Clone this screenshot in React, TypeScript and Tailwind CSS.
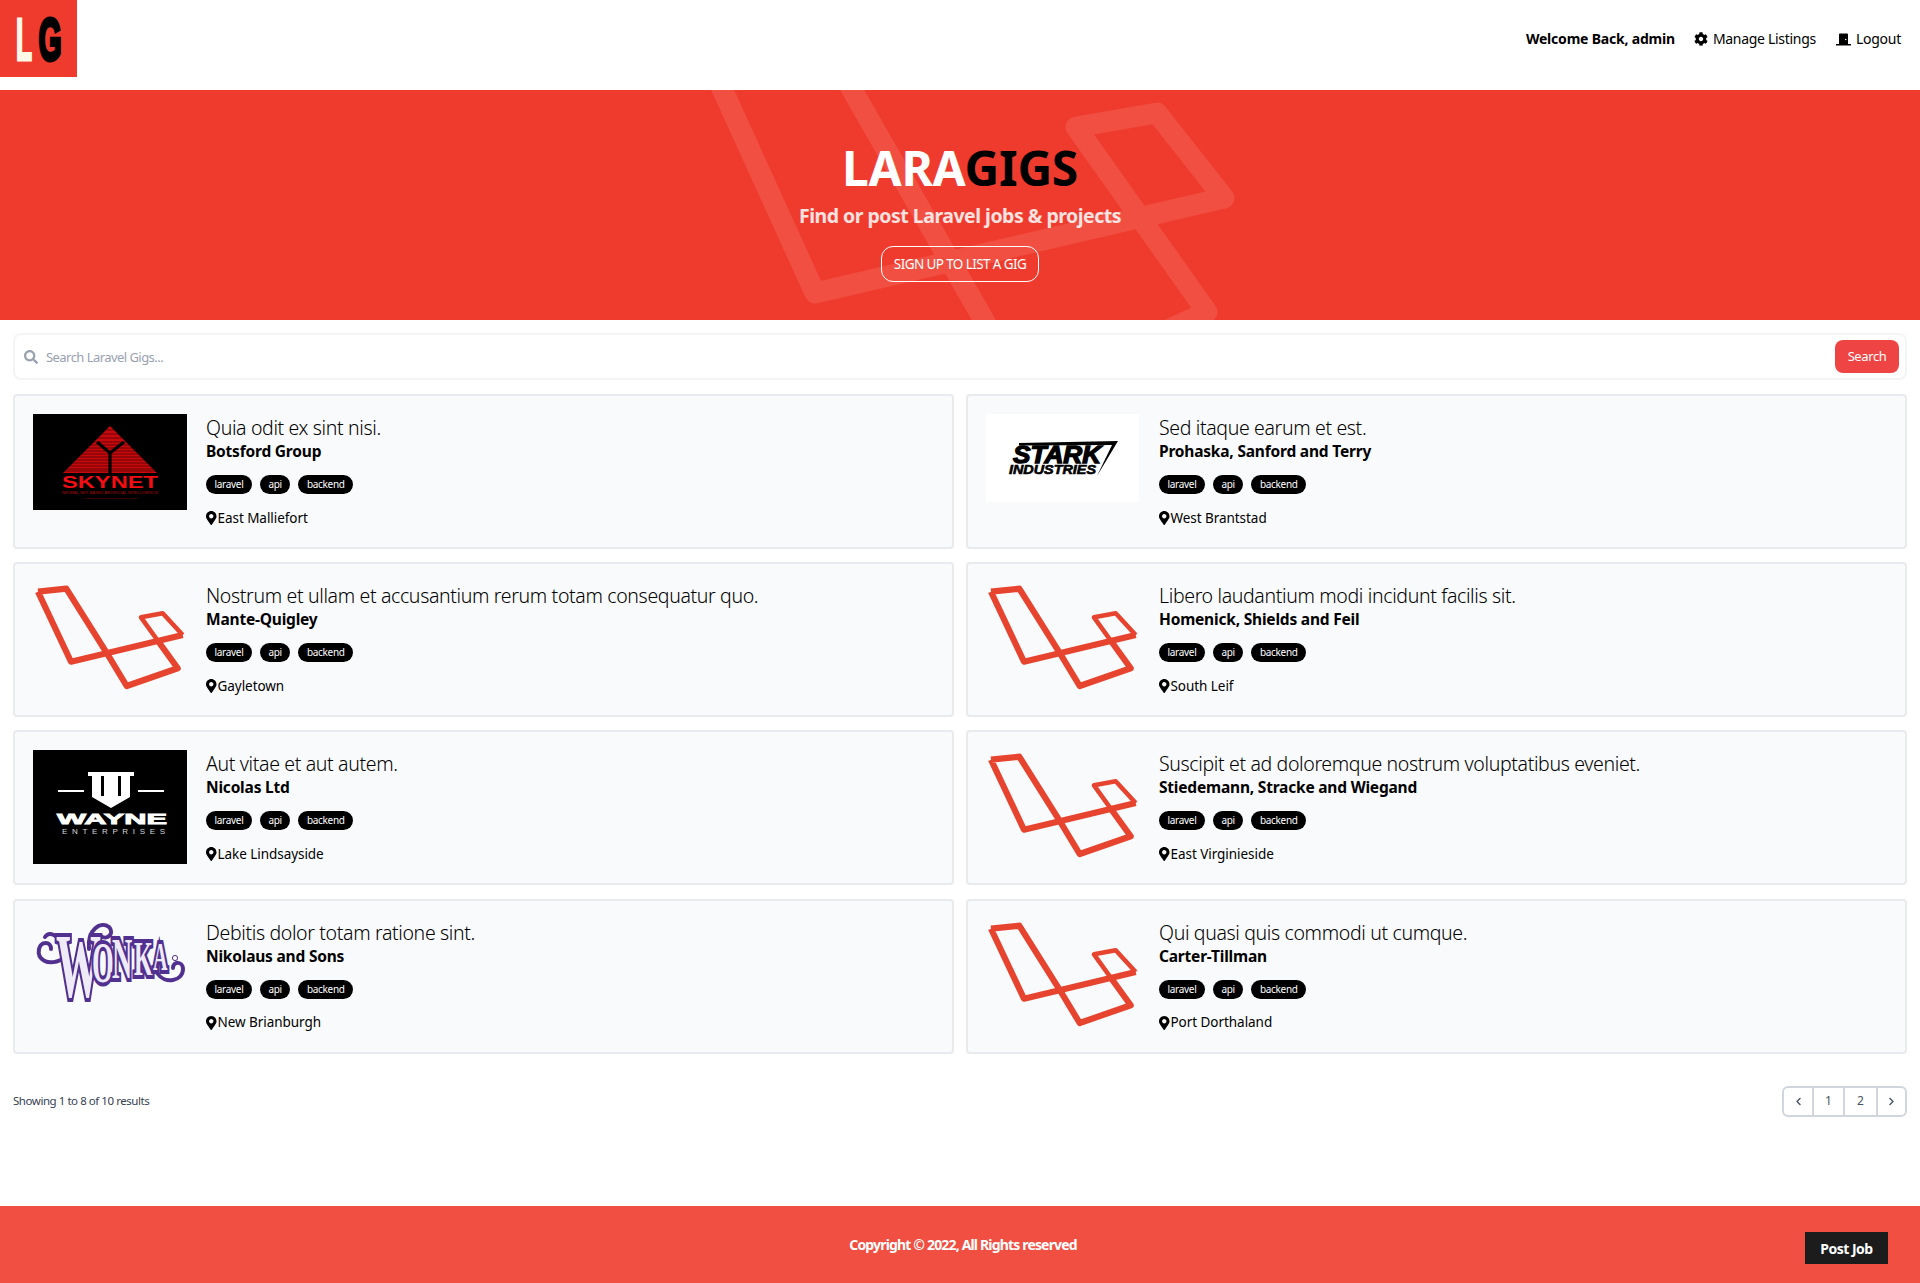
import React from "react";
import {
  FaChevronLeft,
  FaChevronRight,
  FaCog,
  FaDoorClosed,
  FaMapMarkerAlt,
  FaSearch,
} from "react-icons/fa";

const LaravelLogo = () => (
  <svg viewBox="0 0 154 112" className="w-[154px] h-[112px]" fill="none" stroke="#e74430" strokeLinejoin="round">
    <path d="M5 9.7 33.3 6.7 74 71.3 93.7 104 144.7 86.3 125 59M5 9.7 38 79.7 149.7 53" strokeWidth="6.2" />
    <path d="M149.7 53 129.7 31.3 108 35.3 125 59" strokeWidth="4.6" />
  </svg>
);

const SkynetLogo = () => {
  const stripes = [16, 20, 24, 28, 31, 34, 37, 40, 43, 46, 49, 52, 55, 57];
  return (
    <svg viewBox="0 0 154 96" className="w-[154px] h-[96px] bg-black">
      <polygon points="77,12 124,59 30,59" fill="#c9080b" />
      {stripes.map((y) => (
        <line key={y} x1="20" x2="134" y1={y} y2={y} stroke="#000" strokeWidth="0.5" />
      ))}
      <path d="M64 28 77 39 91 28M77 39V60" stroke="#000" strokeWidth="3.2" fill="none" />
      <text
        x="29"
        y="74"
        textLength="96"
        lengthAdjust="spacingAndGlyphs"
        fontFamily="Liberation Sans"
        fontWeight="700"
        fontSize="16"
        fill="#f40d12"
      >
        SKYNET
      </text>
      <text x="29" y="79.5" textLength="96" lengthAdjust="spacingAndGlyphs" fontFamily="Liberation Sans" fontSize="3" fill="#a80c0c">
        NEURAL NET-BASED ARTIFICIAL INTELLIGENCE
      </text>
      <text x="50" y="85" textLength="54" lengthAdjust="spacingAndGlyphs" fontFamily="Liberation Sans" fontSize="2.4" fill="#8d0b0b">
        CYBERDYNE SYSTEMS CORPORATION
      </text>
    </svg>
  );
};

const StarkLogo = () => (
  <svg viewBox="0 0 153 88" className="w-[153px] h-[88px] bg-white">
    <polygon points="33,29 132,27 111,62 126,31 33,31.5" fill="#000" />
    <text
      x="27"
      y="49"
      textLength="88"
      lengthAdjust="spacingAndGlyphs"
      fontFamily="Liberation Sans"
      fontWeight="700"
      fontStyle="italic"
      fontSize="23"
      stroke="#000"
      strokeWidth="1.3"
    >
      STARK
    </text>
    <text
      x="23"
      y="60"
      textLength="87"
      lengthAdjust="spacingAndGlyphs"
      fontFamily="Liberation Sans"
      fontWeight="700"
      fontStyle="italic"
      fontSize="12.5"
      stroke="#000"
      strokeWidth="0.6"
    >
      INDUSTRIES
    </text>
  </svg>
);

const WayneLogo = () => (
  <svg viewBox="0 0 154 114" className="w-[154px] h-[114px] bg-black">
    <path d="M25 41H51M105 41H131" stroke="#fff" strokeWidth="2" />
    <polygon points="55,22 101,22 101,26 97,26 97,47 78,58 59,47 59,26 55,26" fill="#fff" />
    <rect x="68" y="26" width="3" height="20" fill="#000" />
    <rect x="85" y="26" width="3" height="20" fill="#000" />
    <text
      x="24"
      y="74"
      textLength="110"
      lengthAdjust="spacingAndGlyphs"
      fontFamily="Liberation Sans"
      fontWeight="700"
      fontSize="15"
      fill="#fff"
      stroke="#fff"
      strokeWidth="0.8"
    >
      WAYNE
    </text>
    <text x="29" y="83.5" textLength="103" fontFamily="Liberation Sans" fontSize="8" fill="#d8d8d8">
      ENTERPRISES
    </text>
  </svg>
);

const WonkaLogo = () => (
  <svg viewBox="0 0 154 100" className="w-[154px] h-[100px]" fill="none">
    <path
      d="M30 40C14 48 4 40 6 30 8 22 18 22 18 30M28 26C26 16 16 12 12 18M56 30C54 10 68 2 76 8 82 14 74 22 68 17M124 54C132 66 150 62 150 50 150 42 140 42 140 49"
      stroke="#52308f"
      strokeWidth="4"
      strokeLinecap="round"
    />
    <circle cx="142" cy="39" r="2.6" stroke="#52308f" />
    <text
      transform="scale(0.5 1)"
      fontFamily="Liberation Serif"
      fontWeight="700"
      fill="#efeaf7"
      stroke="#52308f"
      strokeWidth="8"
      paintOrder="stroke"
    >
      <tspan x="46" y="78" fontSize="90">W</tspan>
      <tspan x="118" y="63" fontSize="56">O</tspan>
      <tspan x="158" y="59" fontSize="56">N</tspan>
      <tspan x="202" y="56" fontSize="48">K</tspan>
      <tspan x="240" y="51" fontSize="40">A</tspan>
    </text>
  </svg>
);

const logos = {
  skynet: <SkynetLogo />,
  stark: <StarkLogo />,
  wayne: <WayneLogo />,
  wonka: <WonkaLogo />,
  laravel: <LaravelLogo />,
};

const gigs: { title: string; company: string; city: string; logo: keyof typeof logos }[] = [
  { title: "Quia odit ex sint nisi.", company: "Botsford Group", city: "East Malliefort", logo: "skynet" },
  { title: "Sed itaque earum et est.", company: "Prohaska, Sanford and Terry", city: "West Brantstad", logo: "stark" },
  { title: "Nostrum et ullam et accusantium rerum totam consequatur quo.", company: "Mante-Quigley", city: "Gayletown", logo: "laravel" },
  { title: "Libero laudantium modi incidunt facilis sit.", company: "Homenick, Shields and Feil", city: "South Leif", logo: "laravel" },
  { title: "Aut vitae et aut autem.", company: "Nicolas Ltd", city: "Lake Lindsayside", logo: "wayne" },
  { title: "Suscipit et ad doloremque nostrum voluptatibus eveniet.", company: "Stiedemann, Stracke and Wiegand", city: "East Virginieside", logo: "laravel" },
  { title: "Debitis dolor totam ratione sint.", company: "Nikolaus and Sons", city: "New Brianburgh", logo: "wonka" },
  { title: "Qui quasi quis commodi ut cumque.", company: "Carter-Tillman", city: "Port Dorthaland", logo: "laravel" },
];

const GigCard = ({ gig }: { gig: (typeof gigs)[number] }) => (
  <div className="h-[155px] flex gap-[19px] bg-[#f9fafc] border-2 border-[#e8eaee] rounded pl-[18px] pr-4 pt-[18px]">
    <div className="w-[154px] shrink-0">{logos[gig.logo]}</div>
    <div className="flex flex-col">
      <h3 className="text-[19.5px] leading-[28px] font-light tracking-[-0.35px] text-black">{gig.title}</h3>
      <div className="text-[15.5px] leading-[24px] font-bold tracking-[-0.2px] text-black -mt-[3px]">{gig.company}</div>
      <ul className="flex gap-[8px] mt-[12px]">
        {["laravel", "api", "backend"].map((tag) => (
          <li
            key={tag}
            className="h-[19px] flex items-center rounded-xl bg-black text-white text-[10px] tracking-[-0.3px] px-[8.5px]"
          >
            {tag}
          </li>
        ))}
      </ul>
      <div className="flex items-center text-[13.5px] tracking-[-0.05px] text-black mt-[14px] h-5">
        <FaMapMarkerAlt className="w-[10.5px] h-[14px] mr-[1px]" />
        {gig.city}
      </div>
    </div>
  </div>
);

export default function App() {
  return (
    <div className="min-h-screen flex flex-col bg-white font-['Noto_Sans',sans-serif]">
      <nav className="h-[90px] flex justify-between items-start shrink-0">
        <svg viewBox="0 0 77 77" className="w-[77px] h-[77px] bg-[#ef3b2d]">
          <text x="16" y="60" textLength="16" lengthAdjust="spacingAndGlyphs" fontFamily="Liberation Sans" fontWeight="700" fontSize="60" fill="#fff8e7" stroke="#fff8e7" strokeWidth="3">
            L
          </text>
          <text x="38.5" y="60" textLength="23" lengthAdjust="spacingAndGlyphs" fontFamily="Liberation Sans" fontWeight="700" fontSize="60" fill="#000" stroke="#000" strokeWidth="4">
            G
          </text>
        </svg>
        <ul className="h-[78px] flex items-center gap-5 pr-[19px] text-sm text-black">
          <li className="font-bold tracking-[-0.2px] -mr-[1px]">Welcome Back, admin</li>
          <li className="flex items-center gap-[5px] tracking-[-0.3px]">
            <FaCog className="text-[14px]" />
            Manage Listings
          </li>
          <li className="flex items-center gap-[5px] tracking-[-0.25px]">
            <FaDoorClosed className="text-[15px]" />
            Logout
          </li>
        </ul>
      </nav>

      <section className="relative h-[230px] shrink-0 bg-[#ef3b2d] flex flex-col items-center overflow-hidden">
        <svg className="absolute inset-0 w-full h-full" viewBox="0 0 1920 230" fill="none">
          <path
            d="M709-30 815 203 1224 108 1157 23 1076 37 1207 222 1098 272M835-30 1001 260"
            stroke="#fff"
            strokeOpacity="0.1"
            strokeWidth="21"
            strokeLinejoin="round"
          />
        </svg>
        <h1 className="relative mt-[48px] text-[48px] leading-[60px] font-bold tracking-[-0.3px] text-white">
          LARA<span className="text-black">GIGS</span>
        </h1>
        <p className="relative mt-[4px] text-[19.5px] leading-7 font-bold tracking-[-0.5px] text-white/85">
          Find or post Laravel jobs &amp; projects
        </p>
        <a className="relative mt-[16px] h-[36px] w-[158px] flex items-center justify-center rounded-xl border border-white text-white text-[13.5px] tracking-[-0.6px] uppercase">
          Sign up to list a gig
        </a>
      </section>

      <main className="px-[13px] pt-[13px]">
        <form className="h-[47px] flex items-center justify-between border-2 border-gray-100 rounded-lg pl-[9px] pr-[6px]">
          <div className="flex items-center gap-[8px] text-gray-400">
            <FaSearch className="text-[14px]" />
            <span className="text-[13px] tracking-[-0.55px] mt-[2px]">Search Laravel Gigs...</span>
          </div>
          <button className="h-[33px] w-[64px] rounded-lg bg-[#ef4444] text-white text-[13px] tracking-[-0.4px]">
            Search
          </button>
        </form>

        <div className="grid grid-cols-2 gap-x-3 gap-y-[13.2px] mt-[14px]">
          {gigs.map((gig) => (
            <GigCard key={gig.title} gig={gig} />
          ))}
        </div>

        <div className="flex items-center justify-between mt-[32px]">
          <span className="text-[11.5px] tracking-[-0.45px] text-gray-700">Showing 1 to 8 of 10 results</span>
          <div className="flex h-[31px] border-2 border-gray-300 rounded-md text-[12px] text-gray-600">
            <span className="w-[30px] flex items-center justify-center border-r-2 border-gray-300">
              <FaChevronLeft className="text-[9px]" />
            </span>
            <span className="w-[31px] flex items-center justify-center border-r-2 border-gray-300">1</span>
            <span className="w-[33px] flex items-center justify-center border-r-2 border-gray-300">2</span>
            <span className="w-[27px] flex items-center justify-center">
              <FaChevronRight className="text-[9px]" />
            </span>
          </div>
        </div>
      </main>

      <footer className="relative h-[77px] mt-auto shrink-0 bg-[#f14f42] flex justify-center pt-[29px]">
        <p className="ml-[6px] text-[14px] leading-5 font-bold tracking-[-0.83px] text-white">Copyright © 2022, All Rights reserved</p>
        <a className="absolute right-[32px] top-[26px] h-[32px] w-[83px] flex items-center justify-center bg-[#1c1c1c] text-white text-[14px] font-bold tracking-[-0.5px]">
          Post Job
        </a>
      </footer>
    </div>
  );
}
